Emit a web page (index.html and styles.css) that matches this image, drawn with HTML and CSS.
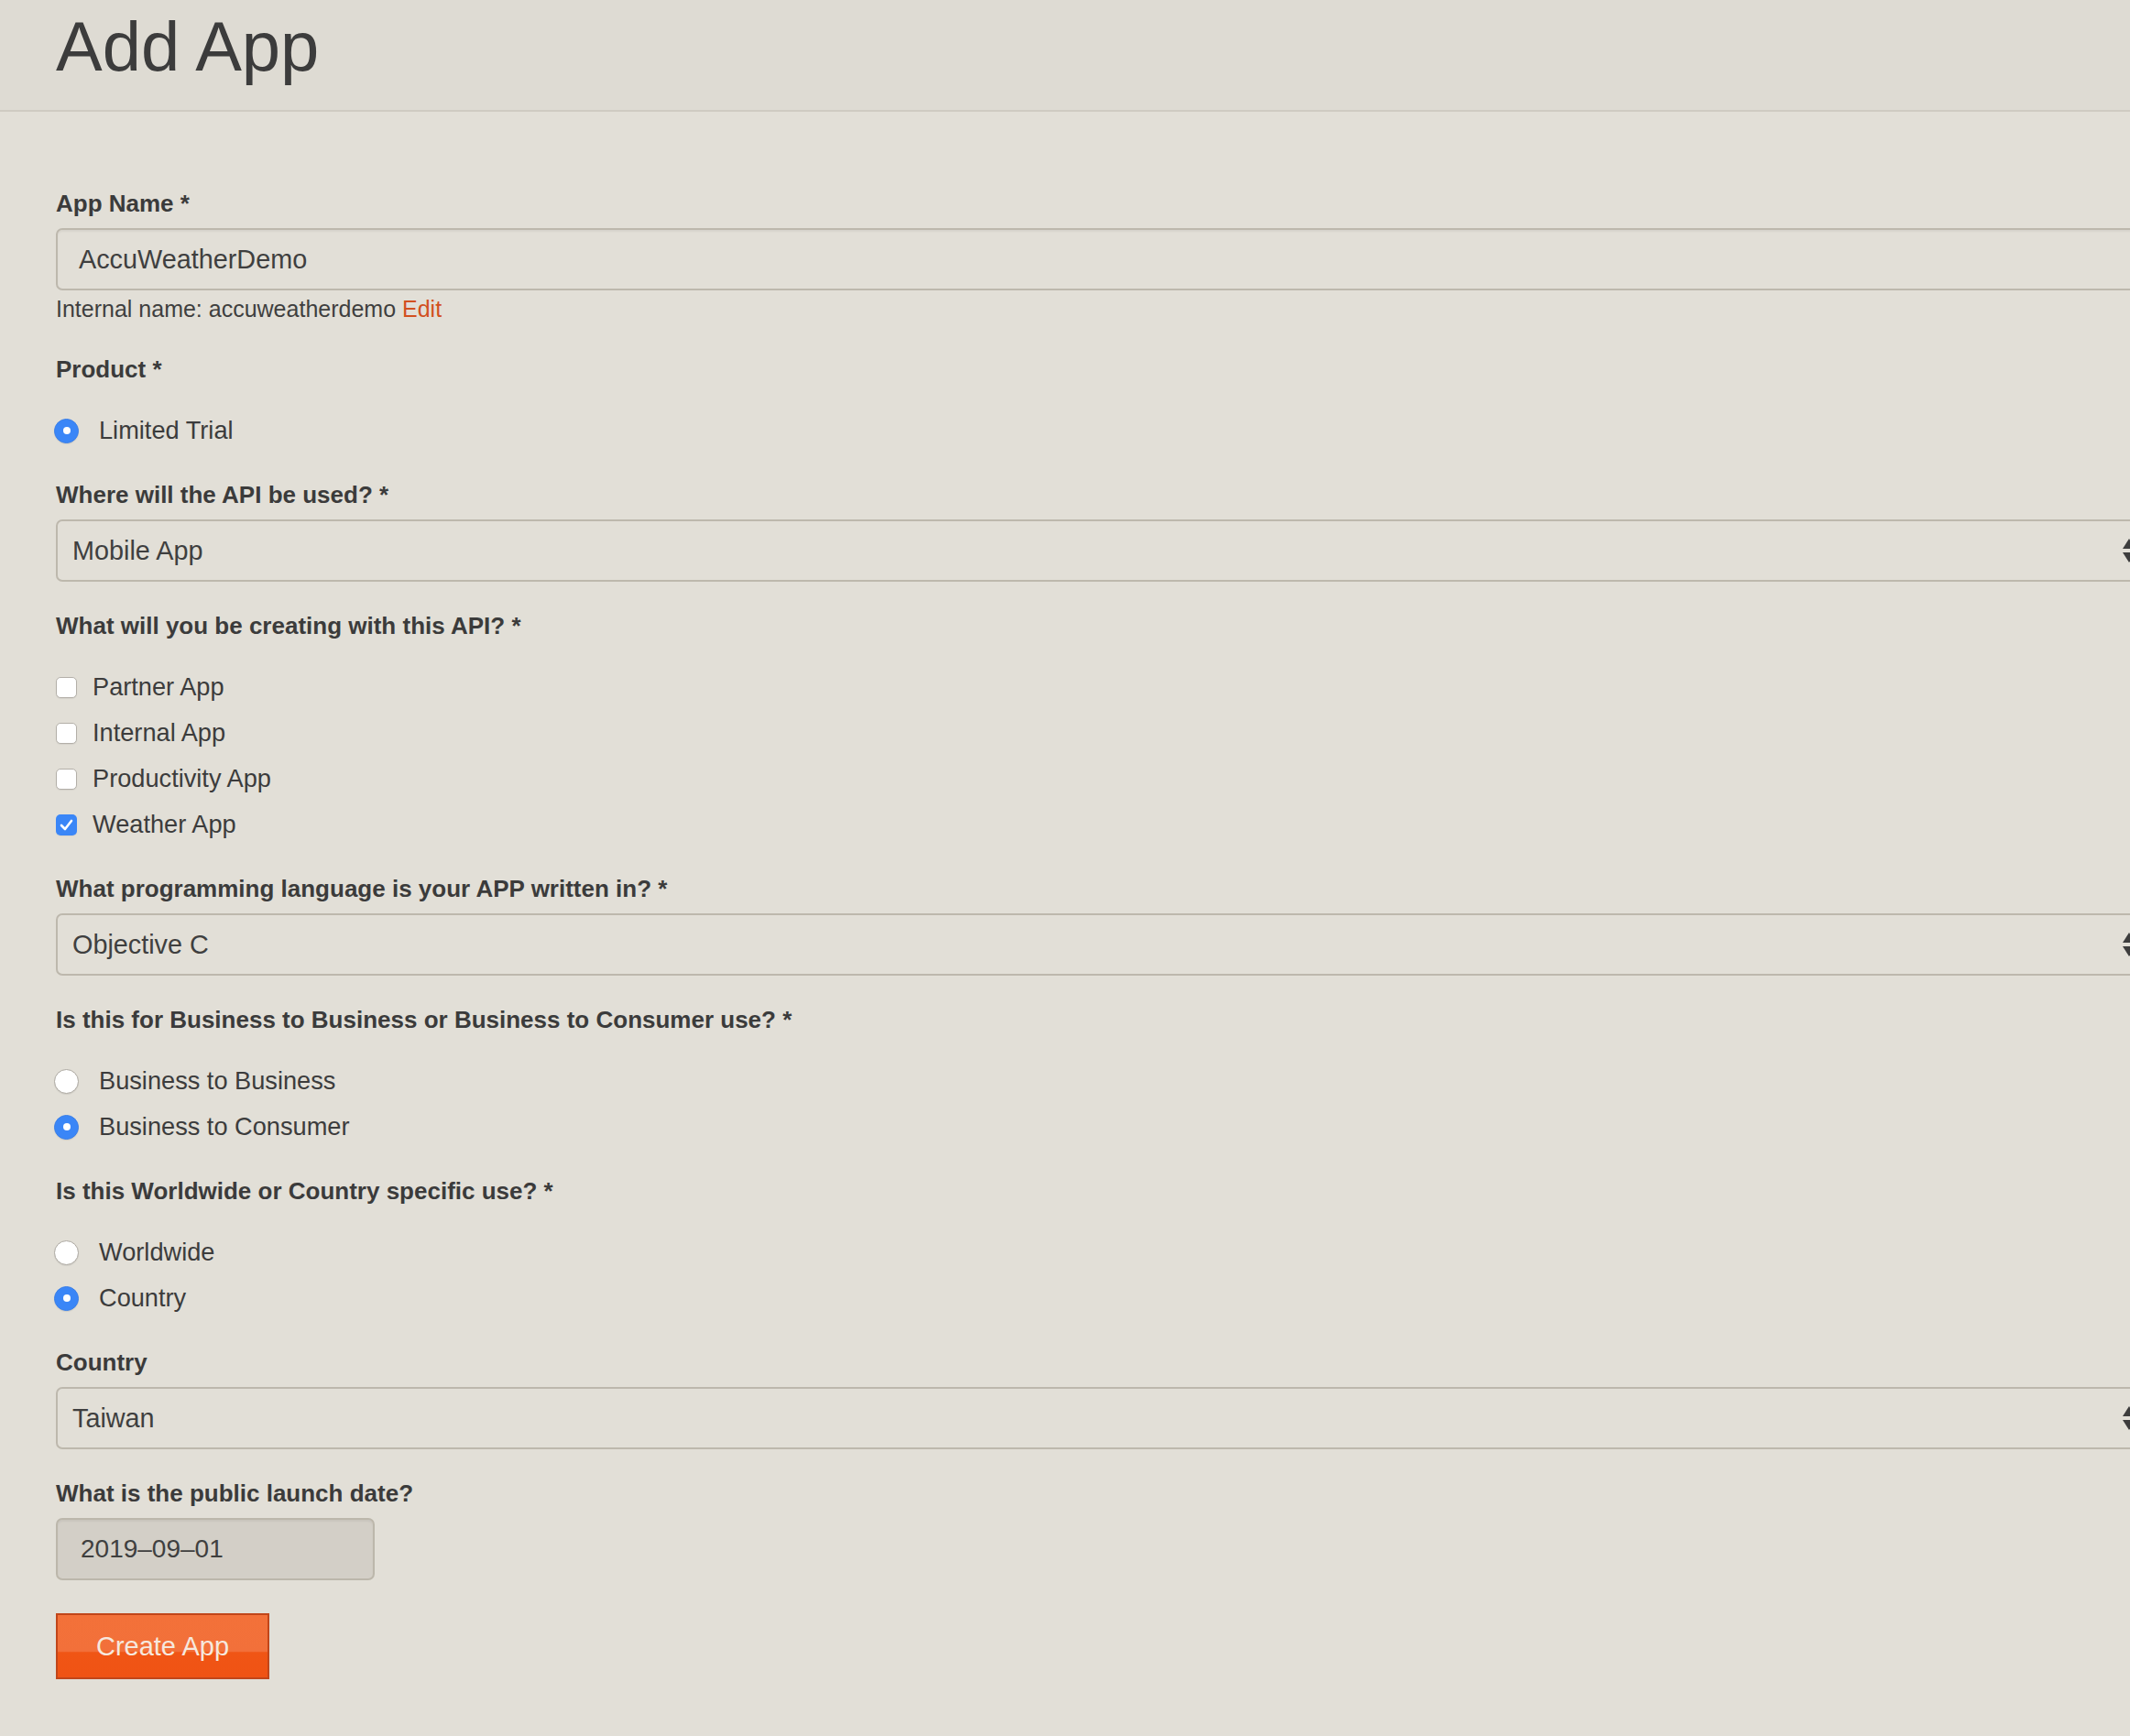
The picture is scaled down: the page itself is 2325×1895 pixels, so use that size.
FILE: index.html
```html
<!DOCTYPE html>
<html lang="en">
<head>
<meta charset="utf-8">
<title>Add App</title>
<link rel="stylesheet" href="styles.css">
</head>
<body>
<header class="page-header">
  <h1 class="page-title">Add App</h1>
</header>
<form class="app-form">
  <div class="form-group">
    <div class="field-label">App Name *</div>
    <div class="text-input">AccuWeatherDemo</div>
    <p class="help">Internal name: accuweatherdemo <a class="edit-link">Edit</a></p>
  </div>

  <div class="form-group">
    <div class="field-label">Product *</div>
    <div class="options">
      <div class="option radio-option"><span class="radio checked"></span><span class="option-text">Limited Trial</span></div>
    </div>
  </div>

  <div class="form-group">
    <div class="field-label">Where will the API be used? *</div>
    <div class="select-input"><span class="select-value">Mobile App</span><svg class="select-arrows" width="16" height="28" viewBox="0 0 16 28"><polygon points="1,11 15,11 8,0" fill="#3d3d3d"/><polygon points="1,15 15,15 8,26" fill="#3d3d3d"/></svg></div>
  </div>

  <div class="form-group">
    <div class="field-label">What will you be creating with this API? *</div>
    <div class="options">
      <div class="option check-option"><span class="checkbox"></span><span class="option-text">Partner App</span></div>
      <div class="option check-option"><span class="checkbox"></span><span class="option-text">Internal App</span></div>
      <div class="option check-option"><span class="checkbox"></span><span class="option-text">Productivity App</span></div>
      <div class="option check-option"><span class="checkbox checked"><svg width="23" height="23" viewBox="0 0 23 23"><path d="M6 12 L10 16 L17 7" fill="none" stroke="#fff" stroke-width="2.6" stroke-linecap="round" stroke-linejoin="round"/></svg></span><span class="option-text">Weather App</span></div>
    </div>
  </div>

  <div class="form-group">
    <div class="field-label">What programming language is your APP written in? *</div>
    <div class="select-input"><span class="select-value">Objective C</span><svg class="select-arrows" width="16" height="28" viewBox="0 0 16 28"><polygon points="1,11 15,11 8,0" fill="#3d3d3d"/><polygon points="1,15 15,15 8,26" fill="#3d3d3d"/></svg></div>
  </div>

  <div class="form-group">
    <div class="field-label">Is this for Business to Business or Business to Consumer use? *</div>
    <div class="options">
      <div class="option radio-option"><span class="radio"></span><span class="option-text">Business to Business</span></div>
      <div class="option radio-option"><span class="radio checked"></span><span class="option-text">Business to Consumer</span></div>
    </div>
  </div>

  <div class="form-group">
    <div class="field-label">Is this Worldwide or Country specific use? *</div>
    <div class="options">
      <div class="option radio-option"><span class="radio"></span><span class="option-text">Worldwide</span></div>
      <div class="option radio-option"><span class="radio checked"></span><span class="option-text">Country</span></div>
    </div>
  </div>

  <div class="form-group">
    <div class="field-label">Country</div>
    <div class="select-input"><span class="select-value">Taiwan</span><svg class="select-arrows" width="16" height="28" viewBox="0 0 16 28"><polygon points="1,11 15,11 8,0" fill="#3d3d3d"/><polygon points="1,15 15,15 8,26" fill="#3d3d3d"/></svg></div>
  </div>

  <div class="form-group last-group">
    <div class="field-label">What is the public launch date?</div>
    <div class="date-input">2019–09–01</div>
  </div>

  <div class="actions">
    <button type="button" class="create-btn">Create App</button>
  </div>
</form>
</body>
</html>
```

FILE: styles.css
```css
html, body {
  margin: 0;
  padding: 0;
}

body {
  background: #e2dfd7;
  color: #3c3c3c;
  font-family: "Liberation Sans", Arial, "Noto Sans CJK SC", sans-serif;
  width: 2325px;
  height: 1895px;
  overflow: hidden;
}

.page-header {
  background: #dedbd3;
  border-bottom: 2px solid #cfcbc2;
  height: 120px;
  box-sizing: content-box;
  padding-left: 61px;
}

.page-title {
  margin: 0;
  padding-top: 10px;
  font-size: 76px;
  line-height: 81px;
  font-weight: normal;
  color: #3c3c3c;
}

.app-form {
  padding: 80px 0 0 61px;
}

.form-group {
  margin-bottom: 28px;
}

.field-label {
  font-size: 26px;
  font-weight: bold;
  line-height: 40px;
  height: 40px;
  margin-bottom: 7px;
  color: #3b3b3b;
  white-space: nowrap;
}

.text-input,
.select-input,
.date-input {
  box-sizing: border-box;
  height: 68px;
  border: 2px solid #bdb8ad;
  border-radius: 7px;
  background: #e2dfd7;
  box-shadow: inset 0 2px 2px rgba(0, 0, 0, 0.05);
  font-size: 28.8px;
  color: #3f3f3f;
  display: flex;
  align-items: center;
  white-space: nowrap;
}

.text-input {
  width: 2300px;
  padding-left: 23px;
}

.select-input {
  width: 2300px;
  padding-left: 16px;
  padding-right: 27px;
  box-shadow: none;
}

.select-value {
  flex: 1;
}

.select-arrows {
  display: block;
  margin-top: 2px;
}

.date-input {
  width: 348px;
  padding-left: 25px;
  background: #d3cfc7;
  border-color: #bcb7ab;
  font-size: 28px;
}

.help {
  margin: 2px 0 0;
  font-size: 25px;
  line-height: 36px;
  color: #3f3f3f;
}

.edit-link {
  color: #d2501f;
  text-decoration: none;
}

.options {
  padding-top: 20px;
  display: flex;
  flex-direction: column;
  gap: 10px;
}

.form-group:has(.options) {
  margin-bottom: 30px;
}

.option {
  display: flex;
  align-items: center;
  height: 40px;
  font-size: 27.2px;
  color: #3c3c3c;
}

.radio {
  box-sizing: border-box;
  width: 27px;
  height: 27px;
  border-radius: 50%;
  background: #ffffff;
  border: 1px solid #aca8a1;
  box-shadow: 0 1px 1px rgba(0, 0, 0, 0.08);
  margin-left: -2px;
  margin-right: 22px;
  display: flex;
  align-items: center;
  justify-content: center;
  flex: none;
}

.radio.checked {
  background: #3a86f7;
  border-color: #3a7fe8;
}

.radio.checked::after {
  content: "";
  width: 8px;
  height: 8px;
  border-radius: 50%;
  background: #ffffff;
}

.checkbox {
  box-sizing: border-box;
  width: 23px;
  height: 23px;
  border-radius: 5px;
  background: #ffffff;
  border: 1px solid #b3afa8;
  box-shadow: 0 1px 1px rgba(0, 0, 0, 0.06);
  margin-right: 17px;
  flex: none;
  display: flex;
}

.checkbox.checked {
  background: #3a86f7;
  border: none;
}

.checkbox svg {
  display: block;
}

.last-group {
  margin-bottom: 36px;
}

.create-btn {
  box-sizing: border-box;
  width: 233px;
  height: 72px;
  border: 2px solid #c1461a;
  border-radius: 0;
  background: linear-gradient(to bottom, #f37139 0%, #f2703a 58%, #f05515 60%, #f05314 100%);
  color: #f6e8de;
  font-family: "Liberation Sans", Arial, sans-serif;
  font-size: 29px;
  padding: 0;
  cursor: pointer;
}
```
